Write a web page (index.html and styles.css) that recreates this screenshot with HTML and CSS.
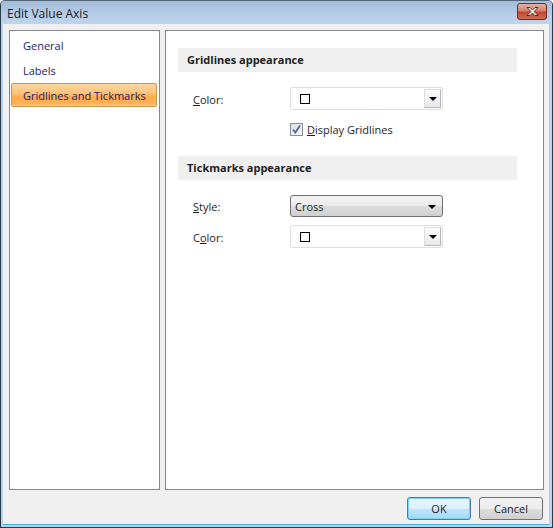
FILE: index.html
```html
<!DOCTYPE html>
<html>
<head>
<meta charset="utf-8">
<link rel="stylesheet" href="styles.css">
</head>
<body>
<div class="window">
  <div class="titlebar">
    <span class="title">Edit Value Axis</span>
    <span class="close">
      <svg width="15" height="11" viewBox="0 0 15 11">
        <path d="M2 1.5 L5 1.5 L7.5 4 L10 1.5 L13 1.5 L9 5.5 L13 9.5 L10 9.5 L7.5 7 L5 9.5 L2 9.5 L6 5.5 Z" fill="#fff" stroke="#5a2c25" stroke-width="1" stroke-linejoin="round"/>
      </svg>
    </span>
  </div>
  <div class="client">
    <div class="panels">
      <div class="nav">
        <div class="nav-item">General</div>
        <div class="nav-item">Labels</div>
        <div class="nav-item selected">Gridlines and Tickmarks</div>
      </div>
      <div class="content">
        <div class="band">Gridlines appearance</div>
        <div class="row row-first">
          <span class="label"><u>C</u>olor:</span>
          <div class="combo">
            <span class="swatch"></span>
            <span class="dd-btn"><span class="arrow"></span></span>
          </div>
        </div>
        <div class="check-row">
          <span class="checkbox">
            <svg width="11" height="11" viewBox="0 0 11 11"><path d="M2 5.5 L4.3 8.5 L9 1.5" fill="none" stroke="#4a64a0" stroke-width="1.7"/></svg>
          </span>
          <span class="check-label"><u>D</u>isplay Gridlines</span>
        </div>
        <div class="band band-second">Tickmarks appearance</div>
        <div class="row row-first">
          <span class="label"><u>S</u>tyle:</span>
          <div class="select">
            <span>Cross</span>
            <span class="arrow"></span>
          </div>
        </div>
        <div class="row row-next">
          <span class="label">C<u>o</u>lor:</span>
          <div class="combo">
            <span class="swatch"></span>
            <span class="dd-btn"><span class="arrow"></span></span>
          </div>
        </div>
      </div>
    </div>
    <div class="buttons">
      <button class="btn btn-default">OK</button>
      <button class="btn">Cancel</button>
    </div>
  </div>
</div>
</body>
</html>
```

FILE: styles.css
```css
* { box-sizing: border-box; }
html, body { margin: 0; padding: 0; background: #fff; }
body { font-family: "Open Sans", "Noto Sans", sans-serif; font-size: 11px; color: #1e1e1e; }

.window {
  width: 553px;
  height: 528px;
  border: 1px solid #2b3a4a;
  border-top-color: #55677a;
  background: #b9d0ea;
  display: flex;
  flex-direction: column;
  padding: 0 3px 2px 2px;
  border-radius: 5px 5px 0 0;
}

.titlebar {
  height: 24px;
  margin: 0 -3px 0 -2px;
  padding: 0 5px 0 6px;
  background: linear-gradient(#a4bcd9, #b6cde7 60%, #bed4ec);
  display: flex;
  align-items: center;
  justify-content: space-between;
  border-radius: 4px 4px 0 0;
}
.title { font-size: 12px; color: #1a1a1a; margin-top: 1px; }
.close {
  width: 30px;
  height: 17px;
  margin-top: -3px;
  border: 1px solid #6b2a22;
  border-radius: 3px;
  background: linear-gradient(#e9b2a3, #d4816d 45%, #c0462f 55%, #cf6e55);
  display: flex;
  align-items: center;
  justify-content: center;
}

.client {
  flex: 1;
  background: #f0f0f0;
  padding: 6px 5px 4px 6px;
  display: flex;
  flex-direction: column;
  border-bottom: 1px solid #41b4e4;
}

.panels { display: flex; gap: 5px; height: 460px; }

.nav {
  width: 151px;
  border: 1px solid #828790;
  background: #fff;
  padding: 2px 2px 0 1px;
}
.nav-item {
  height: 25px;
  line-height: 24px;
  padding-top: 1px;
  padding-left: 12px;
  color: #1b1b6b;
}
.nav-item.selected {
  height: 24px;
  line-height: 21px;
  padding-top: 1px;
  padding-left: 11px;
  border: 1px solid #c6964f;
  border-radius: 2px;
  background: linear-gradient(#fed8a2, #ffc27a 40%, #ffaa4a 60%, #ffb45a 92%, #ffd29a);
}

.content {
  flex: 1;
  border: 1px solid #828790;
  background: #fff;
  padding: 17px 26px 0 12px;
}
.band {
  height: 24px;
  padding-top: 1px;
  line-height: 22px;
  background: #f0f0f0;
  padding-left: 9px;
  font-weight: bold;
  color: #222;
}
.band-second { margin-top: 20px; }

.row { display: flex; align-items: center; }
.row-first { margin-top: 15px; }
.row-next { margin-top: 8px; }
.label { width: 112px; padding-left: 15px; padding-top: 1px; color: #1e1e1e; }

.combo {
  width: 153px;
  height: 23px;
  border: 1px solid #d9dfe7;
  border-radius: 2px;
  background: #fff;
  display: flex;
  align-items: center;
  justify-content: space-between;
  padding: 0 1px 0 9px;
}
.swatch {
  width: 10px;
  height: 10px;
  border: 1px solid #000;
  background: #fff;
}
.dd-btn {
  width: 17px;
  height: 19px;
  border: 1px solid #b7b7b7;
  border-top-color: #e0e0e0;
  border-left-color: #e0e0e0;
  background: linear-gradient(#fafafa, #e9e9e9);
  display: flex;
  align-items: center;
  justify-content: center;
}
.arrow {
  width: 0;
  height: 0;
  border-left: 4px solid transparent;
  border-right: 4px solid transparent;
  border-top: 4px solid #000;
}

.check-row {
  display: flex;
  align-items: center;
  margin-top: 12px;
  padding-left: 112px;
  height: 14px;
}
.checkbox {
  width: 13px;
  height: 13px;
  border: 1px solid #8e8f8f;
  background: linear-gradient(135deg, #dcdfe6, #f4f6f9);
  display: flex;
  align-items: center;
  justify-content: center;
  margin-right: 4px;
}
.check-label { color: #1e1e1e; padding-top: 1px; }

.select {
  width: 153px;
  height: 22px;
  border: 1px solid #707070;
  border-radius: 3px;
  background: linear-gradient(#f3f3f3, #ebebeb 50%, #dddddd 50%, #cfcfcf);
  display: flex;
  align-items: center;
  justify-content: space-between;
  padding: 1px 6px 0 4px;
  color: #1e1e1e;
}

.buttons {
  display: flex;
  justify-content: flex-end;
  gap: 8px;
  margin-top: 7px;
  padding-right: 1px;
}
.btn {
  width: 64px;
  height: 23px;
  border: 1px solid #707070;
  border-radius: 3px;
  background: linear-gradient(#f3f3f3, #ebebeb 50%, #dddddd 50%, #cfcfcf);
  font-family: "Open Sans", "Noto Sans", sans-serif;
  font-size: 11px;
  color: #1e1e1e;
  padding: 0;
}
.btn-default {
  border-color: #3c7fb1;
  background: linear-gradient(#eaf6fd, #d9f0fc 50%, #bee6fd 50%, #a7d9f5);
  box-shadow: inset 0 0 0 1px #7ad2f6;
}
```
